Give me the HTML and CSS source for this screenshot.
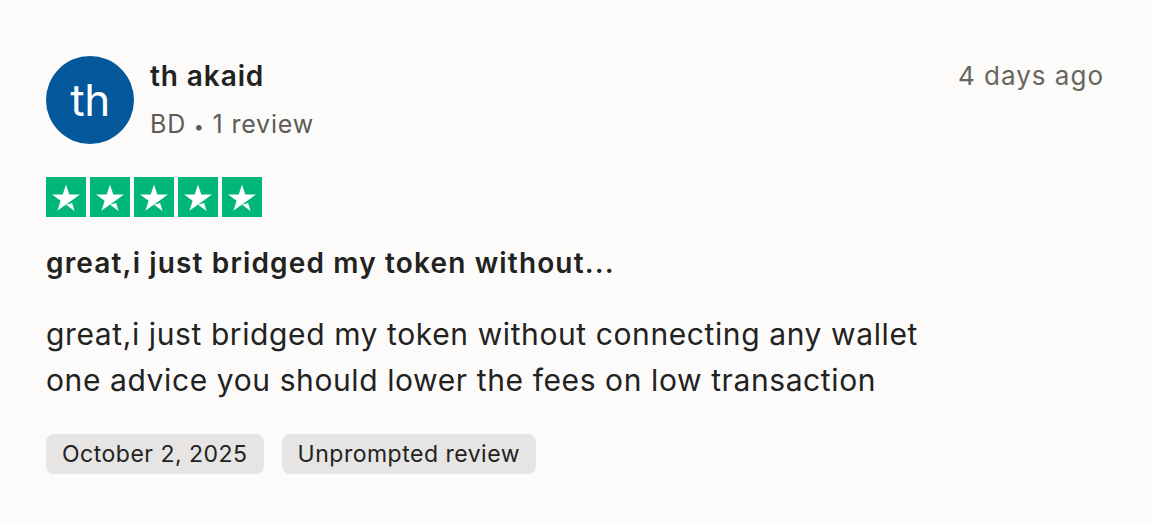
FILE: index.html
```html
<!DOCTYPE html>
<html lang="en">
<head>
<meta charset="utf-8">
<title>Review</title>
<link rel="stylesheet" href="styles.css">
</head>
<body>
<article class="review">
  <header class="review-header">
    <div class="consumer">
      <div class="avatar">th</div>
      <div class="consumer-info">
        <div class="name">th akaid</div>
        <div class="meta">BD <span class="dot">•</span> 1 review</div>
      </div>
    </div>
    <time class="ago">4 days ago</time>
  </header>
  <div class="stars">
    <svg class="star" viewBox="0 0 24 24"><rect width="24" height="24" fill="#00b67a"/><path fill="#fff" d="M12 16.6l3.65-.93 1.52 4.7L12 16.6zm8.4-6.07h-6.42L12 4.5l-1.98 6.03H3.6l5.2 3.730-1.98 6.03 5.2-3.73 3.2-2.3 5.18-3.73z"/></svg>
    <svg class="star" viewBox="0 0 24 24"><rect width="24" height="24" fill="#00b67a"/><path fill="#fff" d="M12 16.6l3.65-.93 1.52 4.7L12 16.6zm8.4-6.07h-6.42L12 4.5l-1.98 6.03H3.6l5.2 3.73-1.98 6.03 5.2-3.73 3.2-2.3 5.18-3.73z"/></svg>
    <svg class="star" viewBox="0 0 24 24"><rect width="24" height="24" fill="#00b67a"/><path fill="#fff" d="M12 16.6l3.65-.93 1.52 4.7L12 16.6zm8.4-6.07h-6.42L12 4.5l-1.98 6.03H3.6l5.2 3.73-1.98 6.03 5.2-3.73 3.2-2.3 5.18-3.73z"/></svg>
    <svg class="star" viewBox="0 0 24 24"><rect width="24" height="24" fill="#00b67a"/><path fill="#fff" d="M12 16.6l3.65-.93 1.52 4.7L12 16.6zm8.4-6.07h-6.42L12 4.5l-1.98 6.03H3.6l5.2 3.73-1.98 6.03 5.2-3.73 3.2-2.3 5.18-3.73z"/></svg>
    <svg class="star" viewBox="0 0 24 24"><rect width="24" height="24" fill="#00b67a"/><path fill="#fff" d="M12 16.6l3.65-.93 1.52 4.7L12 16.6zm8.4-6.07h-6.42L12 4.5l-1.98 6.03H3.6l5.2 3.73-1.98 6.03 5.2-3.73 3.2-2.3 5.18-3.73z"/></svg>
  </div>
  <h2 class="title">great,i just bridged my token without...</h2>
  <p class="body">great,i just bridged my token without connecting any wallet<br>one advice you should lower the fees on low transaction</p>
  <div class="tags">
    <span class="tag">October 2, 2025</span>
    <span class="tag">Unprompted review</span>
  </div>
</article>
</body>
</html>
```
FILE: styles.css
```css
html, body {
  margin: 0;
  padding: 0;
  background: #fcfbfa;
}
body {
  font-family: Inter, "Noto Sans", sans-serif;
  color: #22221f;
}
.review {
  padding: 56px 48px 0 46px;
}
.review-header {
  display: flex;
  justify-content: space-between;
  align-items: flex-start;
}
.consumer {
  display: flex;
  align-items: flex-start;
  gap: 16px;
}
.avatar {
  width: 88px;
  height: 88px;
  border-radius: 50%;
  background: #03589c;
  color: #fff;
  display: flex;
  align-items: center;
  justify-content: center;
  font-size: 44px;
  line-height: 1;
  letter-spacing: -0.5px;
  flex: none;
}
.consumer-info {
  display: flex;
  flex-direction: column;
  padding-top: 2px;
}
.name {
  font-size: 28px;
  font-weight: 600;
  line-height: 36px;
  letter-spacing: 0.9px;
}
.meta {
  margin-top: 12px;
  font-size: 25px;
  line-height: 36px;
  color: #5c5b57;
  letter-spacing: 0.8px;
}
.dot {
  font-size: 18px;
}
.ago {
  font-size: 26px;
  line-height: 36px;
  color: #67665f;
  padding-top: 2px;
  letter-spacing: 1px;
}
.stars {
  display: flex;
  gap: 4px;
  margin-top: 32px;
}
.star {
  width: 40px;
  height: 40px;
  display: block;
}
.title {
  margin: 22px 0 0;
  font-size: 28px;
  font-weight: 600;
  line-height: 48px;
  letter-spacing: 1.15px;
}
.body {
  margin: 24px 0 0;
  font-size: 30px;
  line-height: 46px;
  letter-spacing: 0.6px;
}
.tags {
  display: flex;
  gap: 18px;
  margin-top: 31px;
}
.tag {
  background: #e6e5e3;
  border-radius: 8px;
  padding: 0 16px;
  height: 40px;
  display: flex;
  align-items: center;
  font-size: 23px;
  letter-spacing: 0.5px;
  color: #22221f;
}
```
